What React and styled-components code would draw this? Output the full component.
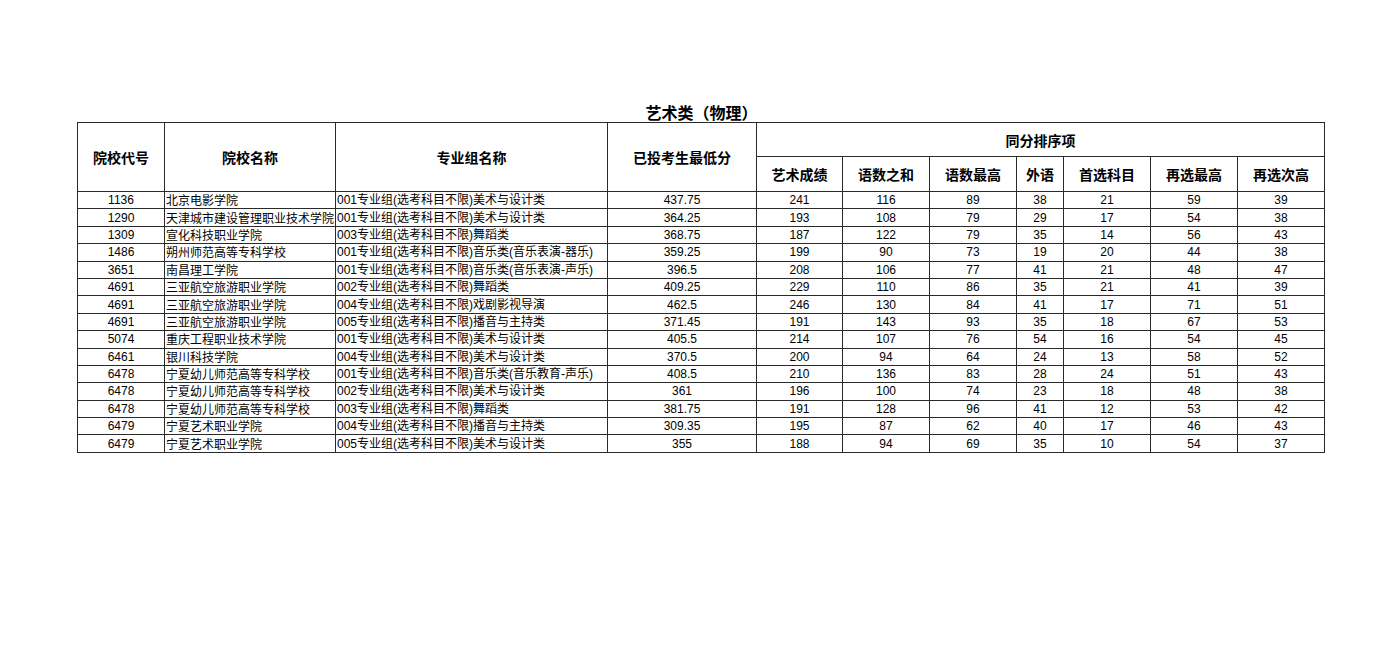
import React from 'react';
import styled, { createGlobalStyle } from 'styled-components';

const GlobalStyle = createGlobalStyle`
  html, body {
    margin: 0;
    padding: 0;
    background: #ffffff;
  }
  body {
    font-family: "Liberation Sans", "Noto Sans CJK SC", sans-serif;
    color: #000;
  }
`;

const Page = styled.div`
  width: 1396px;
  height: 656px;
  padding: 103px 0 0 77px;
  box-sizing: border-box;
`;

const Sheet = styled.div`
  width: 1247px;
  display: flex;
  flex-direction: column;
`;

const Title = styled.div`
  height: 19px;
  line-height: 19px;
  text-align: center;
  font-size: 16px;
  font-weight: 700;
  font-family: "Noto Sans CJK SC", sans-serif;
  padding-left: 2px;
`;

const Table = styled.table`
  border-collapse: collapse;
  table-layout: fixed;
  width: 1247px;
`;

const HeadCell = styled.th`
  border: 1px solid #2a2a2a;
  font-family: "Noto Sans CJK SC", sans-serif;
  font-size: 14px;
  font-weight: 700;
  text-align: center;
  vertical-align: middle;
  padding: 0;
  height: ${p => p.$h || 33}px;
  white-space: nowrap;
`;

const Cell = styled.td`
  border: 1px solid #2a2a2a;
  font-size: 12px;
  font-family: ${p => p.$cjk ? '"Noto Sans CJK SC", sans-serif' : '"Liberation Sans", "Noto Sans CJK SC", sans-serif'};
  text-align: ${p => p.$left ? 'left' : 'center'};
  padding: 0 0 0 ${p => p.$left ? 1 : 0}px;
  height: 16.4px;
  line-height: 14px;
  white-space: nowrap;
  overflow: hidden;
`;

const cols = [87, 171, 272, 149, 86, 87, 87, 47, 87, 87, 87];
const subHeads = ['艺术成绩', '语数之和', '语数最高', '外语', '首选科目', '再选最高', '再选次高'];

const rows = [
  ['1136', '北京电影学院', '001专业组(选考科目不限)美术与设计类', '437.75', 241, 116, 89, 38, 21, 59, 39],
  ['1290', '天津城市建设管理职业技术学院', '001专业组(选考科目不限)美术与设计类', '364.25', 193, 108, 79, 29, 17, 54, 38],
  ['1309', '宣化科技职业学院', '003专业组(选考科目不限)舞蹈类', '368.75', 187, 122, 79, 35, 14, 56, 43],
  ['1486', '朔州师范高等专科学校', '001专业组(选考科目不限)音乐类(音乐表演-器乐)', '359.25', 199, 90, 73, 19, 20, 44, 38],
  ['3651', '南昌理工学院', '001专业组(选考科目不限)音乐类(音乐表演-声乐)', '396.5', 208, 106, 77, 41, 21, 48, 47],
  ['4691', '三亚航空旅游职业学院', '002专业组(选考科目不限)舞蹈类', '409.25', 229, 110, 86, 35, 21, 41, 39],
  ['4691', '三亚航空旅游职业学院', '004专业组(选考科目不限)戏剧影视导演', '462.5', 246, 130, 84, 41, 17, 71, 51],
  ['4691', '三亚航空旅游职业学院', '005专业组(选考科目不限)播音与主持类', '371.45', 191, 143, 93, 35, 18, 67, 53],
  ['5074', '重庆工程职业技术学院', '001专业组(选考科目不限)美术与设计类', '405.5', 214, 107, 76, 54, 16, 54, 45],
  ['6461', '银川科技学院', '004专业组(选考科目不限)美术与设计类', '370.5', 200, 94, 64, 24, 13, 58, 52],
  ['6478', '宁夏幼儿师范高等专科学校', '001专业组(选考科目不限)音乐类(音乐教育-声乐)', '408.5', 210, 136, 83, 28, 24, 51, 43],
  ['6478', '宁夏幼儿师范高等专科学校', '002专业组(选考科目不限)美术与设计类', '361', 196, 100, 74, 23, 18, 48, 38],
  ['6478', '宁夏幼儿师范高等专科学校', '003专业组(选考科目不限)舞蹈类', '381.75', 191, 128, 96, 41, 12, 53, 42],
  ['6479', '宁夏艺术职业学院', '004专业组(选考科目不限)播音与主持类', '309.35', 195, 87, 62, 40, 17, 46, 43],
  ['6479', '宁夏艺术职业学院', '005专业组(选考科目不限)美术与设计类', '355', 188, 94, 69, 35, 10, 54, 37],
];

export default function App() {
  return (
    <>
      <GlobalStyle />
      <Page>
        <Sheet>
          <Title>艺术类（物理）</Title>
          <Table>
            <colgroup>
              {cols.map((w, i) => <col key={i} style={{ width: w }} />)}
            </colgroup>
            <thead>
              <tr>
                <HeadCell rowSpan={2}>院校代号</HeadCell>
                <HeadCell rowSpan={2}>院校名称</HeadCell>
                <HeadCell rowSpan={2}>专业组名称</HeadCell>
                <HeadCell rowSpan={2}>已投考生最低分</HeadCell>
                <HeadCell colSpan={7} $h={33}>同分排序项</HeadCell>
              </tr>
              <tr>
                {subHeads.map(h => <HeadCell key={h} $h={34}>{h}</HeadCell>)}
              </tr>
            </thead>
            <tbody>
              {rows.map((r, i) => (
                <tr key={i}>
                  <Cell>{r[0]}</Cell>
                  <Cell $left $cjk>{r[1]}</Cell>
                  <Cell $left>{r[2]}</Cell>
                  <Cell>{r[3]}</Cell>
                  {r.slice(4).map((v, j) => <Cell key={j}>{v}</Cell>)}
                </tr>
              ))}
            </tbody>
          </Table>
        </Sheet>
      </Page>
    </>
  );
}
